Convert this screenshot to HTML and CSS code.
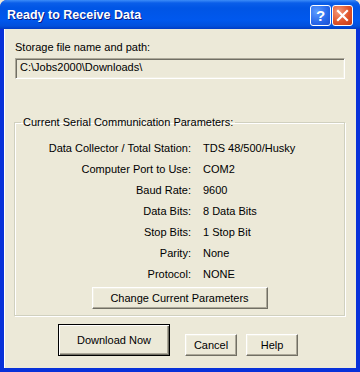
FILE: index.html
```html
<!DOCTYPE html>
<html lang="en">
<head>
    <meta charset="UTF-8">
    <title>Ready to Receive Data</title>
    <link rel="stylesheet" href="styles.css">
</head>
<body>
    <div class="window">
        <div class="titlebar">
            <span class="title">Ready to Receive Data</span>
            <div class="caption-buttons">
                <div class="cap-btn help-btn">?</div>
                <div class="cap-btn close-btn">
                    <svg width="13" height="13" viewBox="0 0 13 13">
                        <path d="M2 2 L11 11 M11 2 L2 11" stroke="#fff" stroke-width="2.2" stroke-linecap="square"/>
                    </svg>
                </div>
            </div>
        </div>

        <div class="client">
            <div class="path-label">Storage file name and path:</div>
            <div class="path-box">C:\Jobs2000\Downloads\</div>

            <fieldset class="group">
                <legend>Current Serial Communication Parameters:</legend>
                <div class="params">
                    <span class="key">Data Collector / Total Station:</span><span>TDS 48/500/Husky</span>
                    <span class="key">Computer Port to Use:</span><span>COM2</span>
                    <span class="key">Baud Rate:</span><span>9600</span>
                    <span class="key">Data Bits:</span><span>8 Data Bits</span>
                    <span class="key">Stop Bits:</span><span>1 Stop Bit</span>
                    <span class="key">Parity:</span><span>None</span>
                    <span class="key">Protocol:</span><span>NONE</span>
                </div>
                <div class="change-row">
                    <button class="btn change-btn">Change Current Parameters</button>
                </div>
            </fieldset>

            <div class="actions">
                <button class="btn default-btn">Download Now</button>
                <button class="btn small-btn cancel-btn">Cancel</button>
                <button class="btn small-btn">Help</button>
            </div>
        </div>
    </div>
</body>
</html>
```

FILE: styles.css
```css
body {
    margin: 0;
    background: #ece9d8;
    font-family: "Liberation Sans", Arial, sans-serif;
    font-size: 11px;
    color: #000;
}
.window {
    width: 360px;
    height: 372px;
    box-sizing: border-box;
    background: #0831d9;
    border-radius: 7px 7px 0 0;
    display: flex;
    flex-direction: column;
    overflow: hidden;
}
.titlebar {
    height: 29px;
    flex: none;
    display: flex;
    align-items: center;
    justify-content: space-between;
    padding: 0 7px 0 7px;
    background: linear-gradient(to bottom, #3c8cf8 0, #0a5ee9 3px, #0055e5 8px, #0058ee 20px, #0250dc 26px, #003bc4 29px);
}
.title {
    color: #fff;
    font-weight: bold;
    font-size: 12.5px;
    text-shadow: 1px 1px 0 #0a1a84;
    margin-top: 1px;
}
.caption-buttons {
    display: flex;
    gap: 1px;
    margin-top: 2px;
}
.cap-btn {
    width: 19px;
    height: 19px;
    border: 1px solid #fff;
    border-radius: 3px;
    display: flex;
    align-items: center;
    justify-content: center;
    color: #fff;
    font-weight: bold;
    font-size: 15px;
}
.help-btn {
    background: radial-gradient(circle at 30% 30%, #5c9cff 0, #2767ea 60%, #1c4fd0 100%);
}
.close-btn {
    background: radial-gradient(circle at 30% 30%, #f49a7c 0, #e0542a 55%, #c43a16 100%);
}
.client {
    flex: 1;
    margin: 0 4px 4px 4px;
    background: #ece9d8;
    padding: 0 11px 0 10px;
    display: flex;
    flex-direction: column;
    border-left: 1px solid #fff;
}
.path-label {
    margin-top: 12px;
    line-height: 13px;
}
.path-box {
    margin-top: 4px;
    height: 21px;
    box-sizing: border-box;
    line-height: 17px;
    padding: 0 4px;
    background: #ece9d8;
    border-top: 1px solid #aca899;
    border-left: 1px solid #aca899;
    border-right: 1px solid #fff;
    border-bottom: 1px solid #fff;
    box-shadow: inset 1px 1px 0 #716f64, inset -1px -1px 0 #f1efe2;
}
.group {
    margin: 37px 0 0 -1px;
    padding: 0 0 6px 0;
    border: 1px solid #d0d0bf;
    box-shadow: inset 1px 1px 0 #fff, 1px 1px 0 #fff;
    min-width: 0;
}
.group legend {
    margin-left: 6px;
    padding: 0 2px;
    line-height: 13px;
}
.params {
    margin-top: 9px;
    display: grid;
    grid-template-columns: 176px auto;
    column-gap: 12px;
    grid-auto-rows: 21px;
    line-height: 21px;
}
.key {
    text-align: right;
}
.change-row {
    display: flex;
    justify-content: center;
    margin-top: 2px;
}
.btn {
    font-family: inherit;
    font-size: 11px;
    background: #ece9d8;
    border: 1px solid;
    border-color: #fff #716f64 #716f64 #fff;
    box-shadow: inset -1px -1px 0 #aca899, inset 1px 1px 0 #f1efe2;
    padding: 0;
    color: #000;
}
.change-btn {
    width: 176px;
    height: 22px;
}
.actions {
    display: flex;
    align-items: flex-end;
    margin: 8px 0 0 43px;
}
.default-btn {
    width: 112px;
    height: 32px;
    border: 1px solid #000;
    box-shadow: inset 1px 1px 0 #fff, inset -1px -1px 0 #716f64, inset -2px -2px 0 #aca899;
}
.small-btn {
    width: 52px;
    height: 22px;
    margin-left: 9px;
}
.cancel-btn {
    margin-left: 15px;
}
```
